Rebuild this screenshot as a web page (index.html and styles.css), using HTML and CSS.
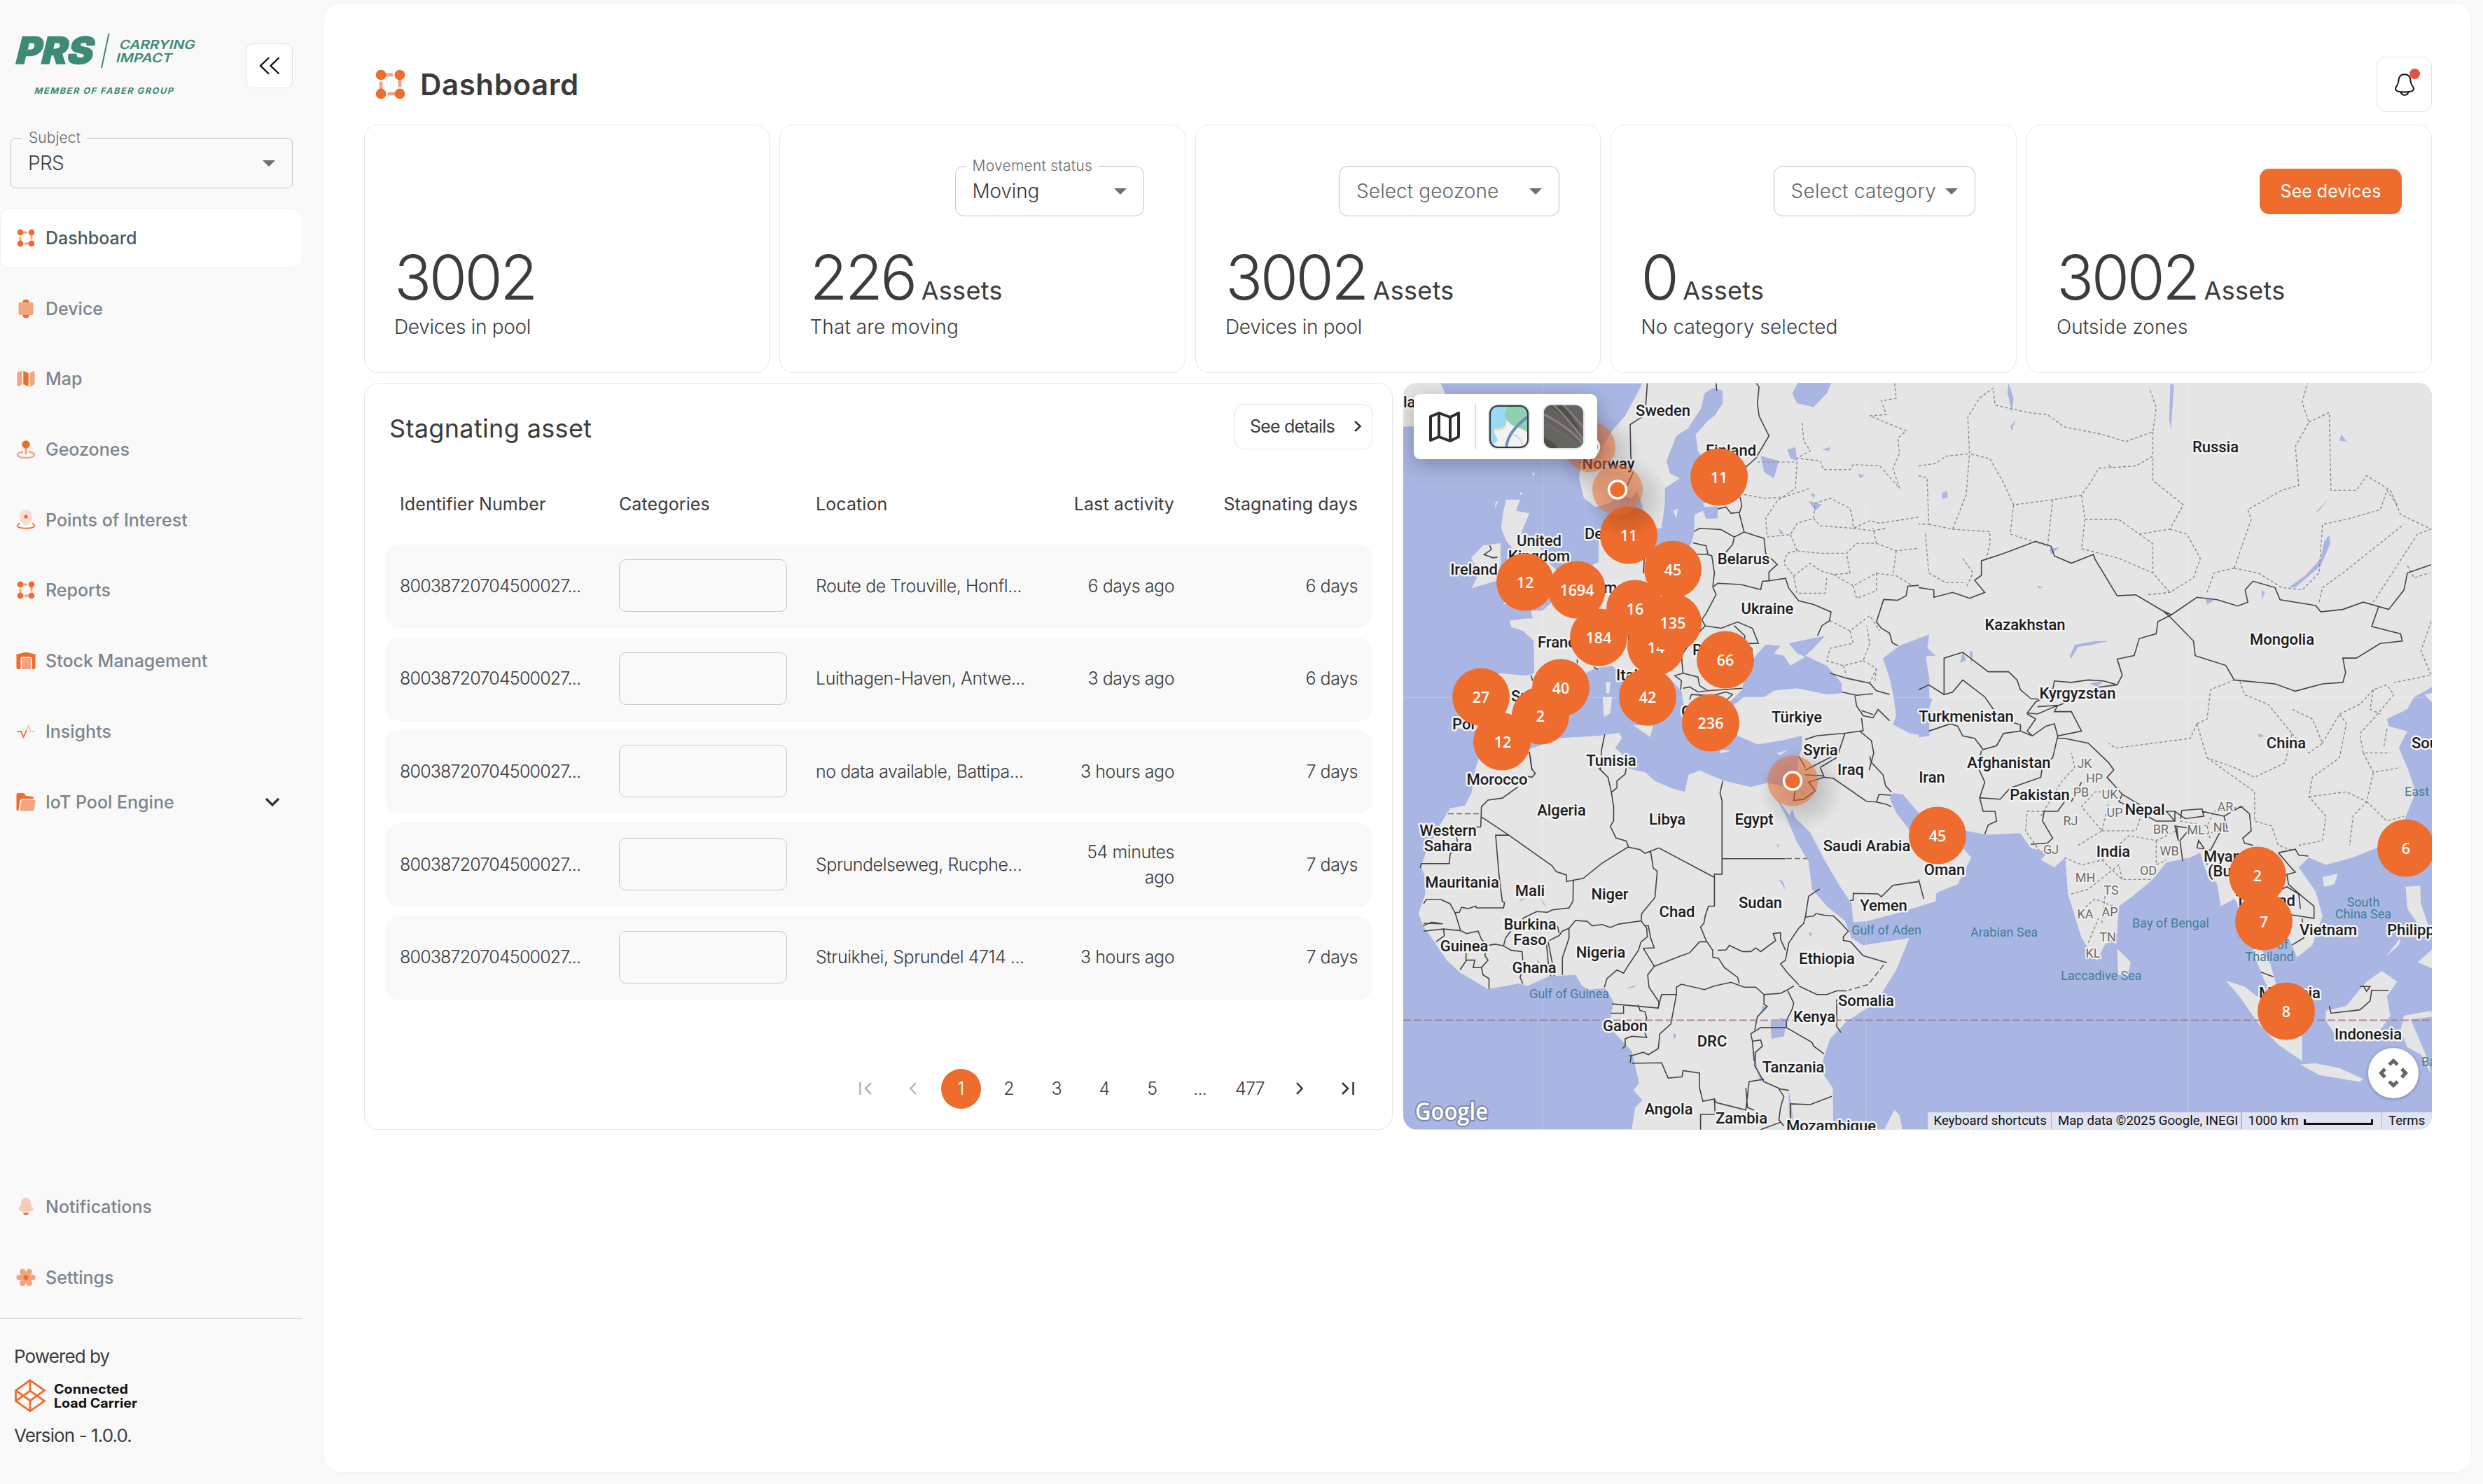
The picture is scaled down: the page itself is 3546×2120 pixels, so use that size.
FILE: index.html
```
<!DOCTYPE html>
<html lang="en">
<head>
<meta charset="utf-8">
<title>Dashboard</title>
<link rel="stylesheet" href="styles.css">
</head>
<body>
<svg class="defs" width="0" height="0" aria-hidden="true">
  <symbol id="i-nodes" viewBox="0 0 28 28">
    <path d="M6 6H15M22 6V15M22 22H13M6 22V13" stroke="#f3a580" stroke-width="3" stroke-linecap="round"/>
    <g fill="#ee6c2d"><circle cx="6" cy="6" r="4.4"/><circle cx="22" cy="6" r="4.4"/><circle cx="6" cy="22" r="4.4"/><circle cx="22" cy="22" r="4.4"/></g>
  </symbol>
  <symbol id="i-caret" viewBox="0 0 18 9"><path d="M0 0H18L9 9Z" fill="#6f6f6f"/></symbol>
</svg>
<div class="app">
  <aside class="sidebar">
    <div class="brand">
      <svg class="logo" width="270" height="94" viewBox="0 0 270 94" fill="#3d8b76">
        <g transform="skewX(-14)" font-family="Inter" font-weight="800">
          <text x="9" y="43" font-size="53" font-weight="900" textLength="110" lengthAdjust="spacingAndGlyphs" stroke="#3d8b76" stroke-width="1.5">PRS</text>
          <g font-weight="600" font-size="18"><text x="153" y="22" textLength="108" lengthAdjust="spacingAndGlyphs">CARRYING</text>
          <text x="153" y="41" textLength="80" lengthAdjust="spacingAndGlyphs">IMPACT</text></g>
          <text x="48" y="86" font-size="12.5" font-weight="700" letter-spacing="1.4" textLength="200" lengthAdjust="spacingAndGlyphs">MEMBER OF FABER GROUP</text>
        </g>
        <path d="M133.500 0L123 49" stroke="#3d8b76" stroke-width="2"/>
      </svg>
      <button class="collapse"><svg width="30" height="26" viewBox="0 0 30 26" fill="none" stroke="#111" stroke-width="2.400"><path d="M14 1.500L2 13L14 24.500M28.500 1.500L16.500 13L28.500 24.500"/></svg></button>
    </div>
    <div class="field subject"><span class="legend">Subject</span><span>PRS</span><svg class="caret"><use href="#i-caret"/></svg></div>
    <nav class="nav">
      <a class="item active"><svg class="ico"><use href="#i-nodes"/></svg>Dashboard</a>
      <a class="item"><svg class="ico" viewBox="0 0 28 28"><rect x="9.500" y="1" width="9" height="26" rx="3.500" fill="#ee6c2d"/><rect x="3.500" y="5" width="21" height="18" rx="2" fill="#f3a580"/></svg>Device</a>
      <a class="item"><svg class="ico" viewBox="0 0 28 28"><path d="M1.500 7Q1.500 4 8.500 3V22Q3 26 1.500 24ZM19.500 6Q25 2 26.500 4V21Q25 24 19.500 25Z" fill="#f3a580"/><path d="M10.300 3L17.700 6V25L10.300 22Z" fill="#ee6c2d"/></svg>Map</a>
      <a class="item"><svg class="ico" viewBox="0 0 28 28"><path d="M10 17.500C-2 19 0 26 14 26S30 19 18 17.500" fill="none" stroke="#f3a580" stroke-width="2.400"/><path d="M14 10V21" stroke="#f3a580" stroke-width="3"/><circle cx="14" cy="7" r="5.700" fill="#ee6c2d"/></svg>Geozones</a>
      <a class="item"><svg class="ico" viewBox="0 0 28 28"><path d="M14 0C8 0 5 4 5 9.500C5 15 10 21 14 21S23 15 23 9.500C23 4 20 0 14 0Z" fill="#f8dccf"/><circle cx="14" cy="9" r="2.600" fill="#ee6c2d"/><path d="M5 18.500C-3 23 4 25.700 14 25.700S31 23 23 18.500" fill="none" stroke="#ee6c2d" stroke-width="1.700"/></svg>Points of Interest</a>
      <a class="item"><svg class="ico"><use href="#i-nodes"/></svg>Reports</a>
      <a class="item"><svg class="ico" viewBox="0 0 28 28"><path d="M0 5L14 1.500L28 5L27.500 7V24Q27 26 25 26H23V11Q23 8.500 20.500 8.500H9Q6.500 8.500 6.500 11V26H3Q.5 26 .5 24V7Z" fill="#ee6c2d"/><path d="M8 11Q8 10 9 10H20Q21 10 21 11V26H8Z" fill="#f3a580"/></svg>Stock Management</a>
      <a class="item"><svg class="ico" viewBox="0 0 28 28" fill="none" stroke-width="1.800"><path d="M14 14L17.500 6L20.500 14H26" stroke="#f8c3aa"/><path d="M2 14H7L10.500 22L15 12" stroke="#ee6c2d"/></svg>Insights</a>
      <a class="item"><svg class="ico" viewBox="0 0 28 28"><path d="M.5 3Q.5 1 3 1H10Q12 1 14 5L23 6Q25 6 25 9H10Q5.500 9 5 14L3.500 26H2Q.5 26 .5 24Z" fill="#ee6c2d"/><path d="M7 13Q8 10.500 11 10.500H25Q28 10.500 27.500 13L26 24Q25 26.500 23 26.500H5.500Z" fill="#f3a580"/></svg>IoT Pool Engine<svg class="chev" width="22" height="14" viewBox="0 0 22 14"><path d="M2 2L11 11L20 2" fill="none" stroke="#333" stroke-width="3.200"/></svg></a>
    </nav>
    <nav class="nav lower">
      <a class="item"><svg class="ico" viewBox="0 0 28 28"><path d="M14 1C9 1 7 5 7 9C7 14 3.500 14 3.500 17C3.500 20 8 21 14 21S24.500 20 24.500 17C24.500 14 21 14 21 9C21 5 19 1 14 1Z" fill="#f7cdb9"/><path d="M10 22.500H18Q17 26 14 26T10 22.500Z" fill="#ee6c2d"/></svg>Notifications</a>
      <a class="item"><svg class="ico" viewBox="0 0 28 28"><g fill="#f3a580"><circle cx="14" cy="14" r="9"/><circle cx="4.500" cy="14" r="4"/><circle cx="23.500" cy="14" r="4"/><circle cx="9.200" cy="5.700" r="4"/><circle cx="18.800" cy="5.700" r="4"/><circle cx="9.200" cy="22.300" r="4"/><circle cx="18.800" cy="22.300" r="4"/></g><circle cx="14" cy="14" r="3.500" fill="#ee6c2d"/></svg>Settings</a>
    </nav>
    <footer class="foot">
      <p>Powered by</p>
      <svg class="clc" width="178" height="48" viewBox="0 0 178 48">
        <path d="M22 1.800L42.500 16.300L22 31L1.500 16.300ZM22 17L42.500 31.300L22 45.800L1.500 31.300ZM1.500 16.300V31.300M22 1.800V17M22 31V45.800" fill="none" stroke="#ee6c2d" stroke-width="2.800"/>
        <g font-family="Inter" font-weight="700" font-size="18.500" fill="#111"><text x="56" y="20.500" textLength="106" lengthAdjust="spacingAndGlyphs">Connected</text><text x="56" y="40.500" textLength="119" lengthAdjust="spacingAndGlyphs">Load Carrier</text></g>
      </svg>
      <p>Version - 1.0.0.</p>
    </footer>
  </aside>
  <main class="main">
    <header class="head">
      <svg class="head-ico"><use href="#i-nodes"/></svg>
      <h1>Dashboard</h1>
      <button class="bell"><svg width="28" height="32" viewBox="0 0 28 32" fill="none" stroke="#151515" stroke-width="2"><path d="M14 1.200C8.500 1.200 5.800 5 5.500 10C5.300 17 1 18 1 22C1 25 6 26.500 14 26.500S27 25 27 22C27 18 22.700 17 22.500 10C22.200 5 19.500 1.200 14 1.200Z"/><path d="M8.500 27Q10.500 30.800 14 30.800T19.500 27"/></svg><i class="dot"></i></button>
    </header>
    <section class="cards">
      <article class="card"><div class="ctl"></div><div class="num">3002</div><div class="sub">Devices in pool</div></article>
      <article class="card"><div class="ctl"><div class="field moving"><span class="legend">Movement status</span><span>Moving</span><svg class="caret"><use href="#i-caret"/></svg></div></div><div class="num">226<small>Assets</small></div><div class="sub wide">That are moving</div></article>
      <article class="card"><div class="ctl"><div class="field geozone"><span>Select geozone</span><svg class="caret"><use href="#i-caret"/></svg></div></div><div class="num">3002<small>Assets</small></div><div class="sub">Devices in pool</div></article>
      <article class="card"><div class="ctl"><div class="field category"><span>Select category</span><svg class="caret"><use href="#i-caret"/></svg></div></div><div class="num">0<small>Assets</small></div><div class="sub wide">No category selected</div></article>
      <article class="card"><div class="ctl flush"><button class="primary">See devices</button></div><div class="num">3002<small>Assets</small></div><div class="sub wide">Outside zones</div></article>
    </section>
    <section class="panels">
      <article class="table">
        <div class="thead"><h2>Stagnating asset</h2><button class="details">See details<svg width="12" height="18" viewBox="0 0 12 18"><path d="M2 2L9.500 9L2 16" fill="none" stroke="#333" stroke-width="2.600"/></svg></button></div>
        <div class="row cols"><span>Identifier Number</span><span>Categories</span><span>Location</span><span class="r">Last activity</span><span class="r">Stagnating days</span></div>
        <div class="rows">
          <div class="row"><span class="id">80038720704500027...</span><i class="box"></i><span>Route de Trouville, Honfl...</span><span class="r">6 days ago</span><span class="r">6 days</span></div>
          <div class="row"><span class="id">80038720704500027...</span><i class="box"></i><span>Luithagen-Haven, Antwe...</span><span class="r">3 days ago</span><span class="r">6 days</span></div>
          <div class="row"><span class="id">80038720704500027...</span><i class="box"></i><span>no data available, Battipa...</span><span class="r">3 hours ago</span><span class="r">7 days</span></div>
          <div class="row"><span class="id">80038720704500027...</span><i class="box"></i><span>Sprundelseweg, Rucphe...</span><span class="r">54 minutes<br>ago</span><span class="r">7 days</span></div>
          <div class="row"><span class="id">80038720704500027...</span><i class="box"></i><span>Struikhei, Sprundel 4714 ...</span><span class="r">3 hours ago</span><span class="r">7 days</span></div>
        </div>
        <div class="pager">
          <span><svg width="18" height="18" viewBox="0 0 18 18" stroke="#b3b3b3"><path d="M1.500 0V18M17 1L9 9L17 17"/></svg></span>
          <span><svg width="10" height="18" viewBox="0 0 10 18" stroke="#b3b3b3"><path d="M9 1L1.500 9L9 17"/></svg></span>
          <span class="on">1</span><span>2</span><span>3</span><span>4</span><span>5</span><span>...</span><span class="w">477</span>
          <span><svg width="10" height="18" viewBox="0 0 10 18" stroke="#333"><path d="M1 1L8.500 9L1 17"/></svg></span>
          <span><svg width="18" height="18" viewBox="0 0 18 18" stroke="#333"><path d="M1 1L9 9L1 17M16.500 0V18"/></svg></span>
        </div>
      </article>
      <article class="map">
        <svg class="world" viewBox="2004 547 1469 1066">
          <defs>
            <radialGradient id="halo"><stop offset="0" stop-color="#000" stop-opacity=".24"/><stop offset="1" stop-color="#000" stop-opacity="0"/></radialGradient>
            <filter id="relief" x="0" y="0" width="1" height="1"><feTurbulence type="fractalNoise" baseFrequency=".018 .026" numOctaves="4" seed="8"/><feColorMatrix values="0 0 0 0 .8  0 0 0 0 .8  0 0 0 0 .8  9 0 0 0 -4.900"/></filter>
            <clipPath id="uplands"><path d="M2470 560L2600 560L2640 547H3473V850L3400 1000L3330 1000L3280 1160L3200 1180L3100 1110L2980 1080L2900 1050L2960 960L2700 750L2600 800L2500 700Z"/></clipPath>
            <clipPath id="highlands"><path d="M2560 1020L2700 1030L2780 1110L2900 1060L2990 1050L3100 1120L3250 1150L3240 1210L3150 1160L2960 1110L2880 1150L2800 1190L2700 1100L2600 1050ZM2590 1330L2640 1350L2600 1400L2570 1380ZM2330 650L2390 560L2370 700ZM2310 1430L2500 1430L2500 1500L2400 1560L2350 1540Z"/></clipPath>
          </defs>
          <rect x="2004" y="547" width="1469" height="1066" fill="#a9b6e3"/>
          <g fill="#e5e5e5">
            <g transform="translate(2000 540) scale(.472 .357)">
              <path d="M0 0H115L135 60L95 130L60 190L0 195Z"/>
              <path d="M735 0L725 40L700 100L680 150L640 210L600 300L545 340L540 400L555 480L590 515L630 500L665 465L700 480L715 450L730 500L740 560L765 600L790 600L800 500L800 440L845 400L815 380L805 330L835 230L870 200L890 160L910 120L920 60L945 38L975 50L975 100L950 150L930 170L893 225L900 290L930 350L1000 360L1045 345L1052 385L1040 440L1020 470L960 490L915 500L920 515L960 512L960 560L925 562L915 530L890 545L888 620L880 660L860 700L740 725L660 735L640 680L625 600L600 610L600 735L560 760L520 840L470 880L430 930L395 930L400 960L370 962L330 970L335 995L370 1010L403 1050L405 1180L380 1190L300 1180L240 1200L190 1240L180 1330L170 1400L230 1410L290 1420L340 1440L420 1430L470 1350L540 1240L545 1190L590 1160L640 1150L690 1210L720 1290L760 1390L800 1340L800 1290L770 1220L730 1130L745 1090L775 1130L800 1180L850 1250L860 1330L880 1410L920 1460L960 1440L945 1330L1000 1290L1035 1245L1040 1180L1075 1110L1105 1065L1150 1070L1130 1100L1160 1110L1180 1150L1225 1115L1200 1100L1175 1060L1230 1045L1285 1030L1250 1080L1225 1110L1290 1150L1335 1220L1335 1260L1290 1265L1200 1240L1130 1250L1100 1275L1040 1275L1005 1310L1015 1370L1020 1430L1080 1465L1150 1450L1215 1430L1215 1500L1200 1620H1620V0Z"/>
              <path d="M320 485L362 485L350 530L390 540L365 620L415 660L450 740L500 800L470 860L380 890L310 905L345 830L325 770L350 700L320 650L305 600L310 540ZM250 668L303 660L303 740L290 810L215 840L240 775L213 720Z"/>
              <path d="M622 1215L635 1215L632 1260L622 1260ZM612 1275L640 1275L635 1340L615 1355ZM705 1388L765 1390L755 1435ZM965 1485L1000 1490L970 1500ZM1138 1500L1170 1488L1150 1508ZM240 1568L290 1520L400 1480L480 1440L600 1430L662 1418L670 1440L650 1480L685 1520L690 1620H230ZM825 530L840 520L835 560ZM288 495L296 490L285 520ZM362 455L370 460L362 468ZM398 380L406 378L404 395Z"/>
            </g>
            <g transform="translate(2000 1080) scale(.472 .3508)">
              <path d="M240 -5L225 60L215 150L195 200L150 212L110 300L75 400L62 450L75 490L75 560L55 640L68 690L100 750L140 830L180 880L265 948L360 925L385 935L450 895L530 890L550 935L570 950L620 945L645 1000L630 1100L700 1200L722 1330L705 1360L732 1400L710 1430L695 1560H1310L1308 1350L1282 1300L1278 1240L1300 1150L1350 1080L1440 1000L1500 870L1540 740L1470 755L1400 770L1365 740L1345 670L1290 610L1245 540L1235 430L1200 350L1165 240L1135 165L1150 190L1178 240L1185 215L1195 250L1240 310L1282 420L1330 530L1365 600L1370 675L1410 672L1500 640L1620 590V340L1568 330L1540 300L1500 230L1480 170L1490 150L1520 155L1568 230H1620V-60H1225L1205 0L1200 60L1185 130L1110 108L1060 125L980 100L935 75L905 58L872 75L860 145L820 130L770 100L740 65L690 50L685 -5Z"/>
              <path d="M1495 1440L1510 1460L1520 1530H1460L1475 1490Z"/>
            </g>
            <g transform="translate(2740 540) scale(.4847 .695)">
              <path d="M-10 0H1560V610L1500 640L1460 655L1440 680L1380 700L1385 715L1440 725L1415 760L1440 800L1465 850L1430 910L1350 965L1280 985L1200 1000L1150 985L1120 1005L1170 1055L1190 1105L1160 1165L1115 1190L1100 1165L1075 1130L1040 1110L1010 1090L1000 1165L1035 1200L1055 1250L1060 1290L1020 1240L985 1180L970 1110L930 1070L890 1085L880 1040L845 1010L830 975L800 985L730 995L690 1030L630 1065L590 1085L585 1140L548 1165L525 1198L480 1150L440 1060L432 985L400 1005L360 990L380 975L330 965L300 935L200 938L140 930L90 925L20 900L-10 880Z"/>
              <path d="M-10 900L60 930L130 965L155 985L115 1040L60 1055L-10 1088ZM585 1172L625 1200L615 1232L588 1225ZM905 1238L960 1250L1060 1305L1130 1350L1130 1403L1060 1370L1000 1325L945 1270ZM1125 1410L1170 1408L1240 1418L1310 1440L1300 1446L1180 1432ZM1200 1300L1260 1290L1320 1240L1365 1218L1410 1240L1380 1270L1390 1310L1340 1360L1230 1352L1200 1320ZM1430 1310L1510 1300L1515 1312L1450 1318L1470 1350L1500 1400L1510 1430L1480 1390L1440 1375L1420 1340ZM1435 1045L1478 1043L1480 1080L1500 1120L1515 1150L1470 1120L1440 1090ZM1375 1190L1420 1150L1415 1165ZM1470 1200L1520 1170V1215ZM1190 1025L1235 1018L1225 1040L1195 1045ZM1325 1440L1400 1440L1390 1450ZM1490 650L1560 640V700Z"/>
            </g>
          </g>
          <g clip-path="url(#uplands)"><rect x="2400" y="547" width="1073" height="700" filter="url(#relief)" opacity=".32"/></g>
          <g clip-path="url(#highlands)"><rect x="2004" y="547" width="1469" height="1066" filter="url(#relief)" opacity=".55"/></g>
          <g fill="#a9b6e3">
            <path transform="translate(2000 540) scale(.472 .357)" d="M1210 0H1310L1290 60L1250 115L1200 100L1185 60ZM1090 310L1145 330L1130 400L1100 375ZM1170 285L1195 275L1200 330L1180 320ZM860 385L868 390L866 405ZM1600 1025L1550 1050L1510 1070L1460 1120L1480 1200L1490 1260L1500 1350L1490 1385L1540 1420L1600 1432V1200L1590 1120ZM1145 600L1160 620L1150 625ZM1240 460L1255 465L1250 480ZM1235 490L1275 505L1255 530ZM1370 545L1366 580ZM1385 380L1405 390L1390 400ZM1275 285L1300 275L1298 290Z"/>
            <path transform="translate(2740 540) scale(.4847 .695)" d="M0 532L15 535L20 550L50 570L0 572ZM0 640L40 660L30 680L45 690L25 710L30 735L0 738ZM1210 322L1213 340L1185 385L1110 430L1090 430L1140 405L1185 370L1195 335ZM445 572L460 548L520 540L560 540L510 548L470 552L450 575ZM505 627L545 622L525 634ZM845 452L870 456L850 465ZM130 560L140 580L122 585ZM150 560L160 562L155 590ZM265 10L280 40L275 70L262 30ZM742 10L752 14L744 105L738 85ZM70 235L85 232L85 245L68 248ZM270 100L285 85L275 108ZM560 175L575 185L560 182ZM1245 115L1262 130L1240 128ZM1010 435L1020 440L1012 455ZM1000 730L1020 735L1003 738ZM385 350L415 348L390 362ZM348 425L365 430L355 432ZM1170 275L1210 245L1180 272Z"/>
            <path transform="translate(2000 1080) scale(.472 .3508)" d="M1120 1080L1140 1078L1150 1065L1170 1075L1160 1140L1122 1150ZM1072 1200L1080 1280L1100 1320L1090 1325L1070 1250L1066 1200ZM1174 1360L1182 1410L1188 1480L1176 1460ZM1095 1015L1108 1020L1092 1045ZM1235 715L1246 722L1240 735ZM1145 500L1158 510L1165 545ZM825 1125L835 1135L828 1155ZM680 945L715 930L705 942ZM1138 360L1145 355L1143 375ZM365 580L380 580L360 592ZM425 575L440 612L430 600ZM412 825L428 850L415 840Z"/>
          </g>
          <g class="dash">
            <path transform="translate(2000 540) scale(.472 .357)" d="M1495 20L1500 80L1455 90L1470 145L1420 150L1530 210L1505 240L1510 300L1490 360L1510 440L1490 410L1450 350L1370 345L1360 365L1280 365L1270 330L1200 320L1240 290L1220 250L1215 170M1080 335L1200 335L1195 440L1140 490L1105 560L1110 635L1180 625L1200 580L1250 560L1270 590L1370 600L1420 570L1450 580L1568 555M1040 465L1100 480L1160 475L1240 440M1250 560L1255 500L1300 480L1360 520L1368 560L1370 600L1430 610L1470 600M1180 625L1200 690L1170 700L1160 740L1190 790L1240 740L1270 770L1310 785L1360 780L1350 700L1380 660L1440 660L1430 600M1200 690L1270 700L1350 700M1190 790L1200 860L1285 860L1290 800M1310 785L1370 830L1440 780L1500 790L1550 830M1370 830L1380 880L1440 850L1440 780M1440 660L1500 690L1568 680M1500 690L1490 790M1300 970L1360 1010L1420 950L1450 1010M1360 1010L1370 1060L1300 1080L1290 1130L1340 1150L1400 1130L1420 1060L1410 990M1340 1150L1350 1190M1400 1130L1440 1160L1420 1220M1440 1160L1435 1220"/>
            <path transform="translate(2740 540) scale(.4847 .695)" d="M0 180L50 175L80 160L150 155L145 80L180 40L220 20L225 55L320 70L380 75L430 100L540 115L610 130L690 110L700 60L680 20M690 110L690 160L640 180L530 185L510 210L480 240L390 250L280 260L250 215L210 165L150 155M0 200L25 205L30 300L0 300M30 300L100 310L140 240L150 155M280 260L270 320L380 345L395 250M480 240L490 290L590 290L650 320L740 310L780 260L690 210L690 160M490 290L480 350L590 370L690 400L740 440M650 320L690 340L690 400M740 310L790 320L830 370L810 410L740 440L670 445M100 310L210 315L210 340L200 370M20 320L30 400L80 420L140 420M130 370L160 400L140 430M930 390L980 290L970 270L1070 230L1120 220L1110 140L1150 90L1130 50L1145 10M1150 90L1210 70L1215 230L1290 230L1320 200L1390 230L1420 280L1510 310M930 390L870 400L850 440M930 390L1000 400L1070 430L1130 435L1180 400L1190 300L1260 290L1360 270L1380 230L1410 260M1180 460L1190 430L1250 400L1340 350L1430 300M1340 460L1470 320L1510 310M1440 385L1460 410L1505 400M820 710L850 700L860 640L930 620M820 710L800 740L580 760L560 750M820 710L850 780L930 800L990 820L1080 790L1100 730L1030 670L960 650L945 620M850 780L990 850L990 910L1040 920L1060 960L1100 970M1100 730L1150 770L1190 750L1160 700L1100 680M1190 750L1240 690L1260 710L1240 780L1160 820L1150 860L1200 900L1190 950L1120 960M1240 690L1300 670L1340 640L1380 630L1400 650L1340 700L1300 730L1310 770L1390 770M1310 770L1340 810L1420 800M1340 810L1320 870L1280 900L1270 960M1320 870L1380 910L1430 900M1150 860L1260 850L1320 870M1340 640L1330 680L1360 690M1380 720L1370 760M1510 500L1480 560L1510 610L1440 620L1400 625M370 890L320 890L315 930L355 970M360 900L420 830L460 800L450 770M430 985L480 1000L540 990L620 940L700 950L760 930M540 990L600 1030L690 1030M450 1060L500 1050L590 1000L600 1030M470 1100L520 1070L590 1090M540 1120L550 1060M500 1160L530 1110M470 960L540 930L480 880L520 850L580 850M540 930L640 930L660 890M700 950L700 1000L730 990M540 930L560 870M770 910L850 920L870 890L960 880M850 920L860 950M820 940L890 930L900 910"/>
          </g>
          <g class="border">
            <path transform="translate(2000 540) scale(.472 .357)" d="M747 20L742 110L730 155L695 185L697 310L703 380L685 430M955 20L957 50M1077 20L1085 35L1080 100L1085 150L1115 230L1075 320L1045 355M960 522L985 515L1000 540L1028 535M1028 475L1033 510L1025 540L1040 615L1010 635L970 605L905 600L888 613M1010 635L1005 665L985 695L960 720M885 658L925 670L930 705L898 703M1040 615L1075 630L1100 640L1105 700L1140 745L1115 775L1115 810L1095 812L1090 845L1030 825L960 820L945 835L955 865L925 940L912 965L922 990L970 1000L1020 975L1065 1000L1083 1060L1040 1062L1042 1030L1010 990M930 705L942 710L950 780L945 830M1115 810L1165 800L1175 840L1205 890L1250 905L1303 935L1298 970L1275 990L1262 1030M922 990L880 1050L850 1110L855 1180L830 1190L850 1210L848 1245M855 1180L900 1195L905 1230L930 1250L1035 1240M855 1240L875 1235L900 1255L930 1250M875 1285L880 1265L940 1270L985 1255L1005 1265L980 1295M738 720L735 780M395 1188L400 1210M585 1155L597 1165M690 1030L690 1060M270 668L275 685L253 705L280 718L293 716M1300 1180L1350 1200L1420 1220L1440 1250L1480 1265M1335 1255L1380 1268L1430 1262M1375 1270L1380 1310L1400 1350L1430 1358L1445 1325L1480 1370M1395 1330L1430 1345M1395 1360L1400 1410L1345 1420L1260 1430L1225 1445M1345 1420L1325 1500L1225 1568M1390 1412L1425 1450L1432 1500L1418 1568M1568 828L1535 832L1530 870L1505 888L1462 885L1440 975L1455 1000L1480 1020L1488 1058L1505 1070M618 1425L608 1490L605 1568M390 1495L398 1568M535 1125L535 1140"/>
            <path transform="translate(2000 1080) scale(.472 .3508)" d="M393 0L397 50L408 70L398 85L385 82M355 125L308 170L265 178L245 205L243 288M243 288L212 288M170 325L172 350L150 400L148 437L63 437L60 455M243 245L325 318L458 445L472 470L502 483L503 510L553 497L610 435L690 368L683 345L652 332L635 285L645 262V205L638 145L628 85L600 48M683 48L680 72L655 100L655 128L640 145M325 321H288L298 480L308 590L315 596L312 617H230L228 610L205 620L185 615L178 635L165 636L150 600L122 583H78L70 600M690 370L725 380L740 395L782 373L950 493M757 388L765 455L777 468L770 575L730 640L728 670L660 683L635 697L610 685L580 690L565 672L530 668L510 700L510 740L490 820V890M523 507L522 590L510 617L460 625L445 635L412 632L370 660M975 100L967 150L973 180V480H950V610H932L922 650L918 680L908 695L925 750L945 790V818L962 822L980 860L1020 900L1025 925M973 417H1165M728 670L745 700L747 735L728 755L720 790L690 850L675 883L655 870L625 905L617 940M738 690L750 690L757 740L768 780L735 782L768 855L850 812L875 800L905 755L925 755M768 855L748 890L752 940L782 1000L780 1025L640 1008M637 1046H675V1010M718 1012L725 1035L740 1040L745 1065L735 1110L745 1145L700 1140L680 1150V1180L672 1190M780 1025L790 970H835L818 1090L785 1130L780 1190L750 1215L735 1205L710 1215L692 1220M835 970L835 940L850 928L920 950L950 935L1000 920L1040 940L1075 940L1100 970L1150 965L1172 950L1190 935M1100 970L1100 1010L1110 1018L1080 1060L1072 1115M1172 955L1190 1005L1185 1030L1168 1075L1168 1105H1090L1060 1130L1065 1160L1090 1155L1095 1180L1075 1205L1072 1260L1085 1290L1100 1325L1150 1355L1175 1360M1168 1105L1245 1165L1250 1180L1282 1212M1065 1160L1070 1240M1205 930L1170 880L1150 845L1165 830L1175 760L1205 700L1220 680L1225 655L1235 570L1268 540M1225 655L1250 650L1258 640L1285 648L1310 650L1330 675L1355 712L1340 735V750L1362 755L1400 812L1472 840M1165 790L1150 745V718L1128 722L1135 750L1090 795L1075 780L1060 795L1035 795L995 770L985 788L960 790M1205 935L1260 970H1290L1320 955L1350 955M1320 990V1100L1333 1125M700 1250L790 1248L810 1310L852 1305L855 1280L905 1290V1350L915 1405L950 1395L955 1410L1000 1425L1045 1440L1055 1325L1100 1315M950 1395L952 1458H908V1520M1045 1350L1050 1430L1070 1440M1145 1355L1160 1385L1150 1430L1145 1480L1160 1505M1180 1480L1180 1415L1240 1418L1305 1385M1090 1520L1150 1490M165 636L182 710L130 703L70 712M70 680L128 682L95 675L68 690M130 703L133 730L108 755M182 710L200 722L235 712L245 745L265 770L285 765L300 768L312 772L318 740L340 700L330 685M265 770L255 810L265 830L245 860L250 890L268 905V948M200 770L198 830L225 830L220 860L245 860M200 830L180 870M312 772L335 790L368 795L372 860L362 900L370 925M440 740L448 850L455 895M370 660L375 680M447 755L462 860L465 895M510 700L490 712L480 730L450 750M475 690L480 720M698 1220L695 1248M1205 0L1225 45M1270 45L1282 85L1235 105L1255 140L1220 175L1190 180L1195 130M1282 85L1310 90L1410 183L1440 186L1448 155L1485 158M1440 186L1470 195L1485 205M1282 80L1225 75M1320 5L1270 45M1420 0L1425 25L1460 75L1468 120L1485 145M1360 587L1370 585V558L1445 560L1455 572L1490 525L1568 510"/>
            <path transform="translate(2740 540) scale(.4847 .695)" d="M0 430L45 435L45 450L100 440L150 452L195 440L165 415L185 405L185 375L250 360L345 335L390 345L400 365L450 380L515 362L520 372L585 447L640 445L720 478L745 486L820 450L880 455L940 468L970 460L962 435L985 417L1050 430L1065 455L1170 467L1185 480L1250 475L1310 460L1385 475L1430 435L1440 400L1510 383M720 478L740 490L810 540L815 570L905 590L930 620L1050 628L1110 643L1190 628L1250 625L1258 605L1250 575L1290 575L1360 545L1425 540L1420 525L1335 510L1355 470M745 486L705 500L700 525L650 535L635 570L585 577L600 610L585 630L545 622L500 620L450 625L400 622L395 640L360 660L330 658L300 640L290 620L265 603L205 603L130 563L75 575V650L100 645L130 620L195 655L240 700L300 712V725L250 730L230 755L190 763L165 740L130 735L115 715L95 710L30 725M0 640L30 630L75 650M585 630L530 635L480 655L400 675L350 690L320 688L345 665L360 660M350 675L410 672L400 685L450 685L480 725L410 735L400 710L375 715L335 735L320 725L345 700L320 690M335 735L300 725M410 735L395 780L365 795L360 820L270 842L240 865L180 862L190 890L225 890L230 910L205 918L195 937M185 765L175 800L195 830L180 862M410 740L430 740L500 750L560 790L575 805L555 820L600 855L660 880L730 890L755 910M430 870L410 890L370 890L365 910L395 945L380 955L330 958M480 830L450 870M600 855L590 870L620 880L700 910L755 910V890L730 890M755 890L785 905L840 900L835 885L775 888L772 905M835 890L900 900L950 880L975 895L980 930L955 945L960 955L985 960M900 900L910 930L890 930L860 970L820 965L825 950L840 965L850 1000M760 920L765 950L755 920L800 925L770 950L778 992M1060 975L1110 968L1120 980L1148 982M1060 975L1090 1000L1110 1015L1085 1020L1090 1040L1130 1065L1165 1085L1165 1110L1120 1105L1070 1100M1070 1050L1085 1045L1120 1060L1125 1090M1130 1110L1135 1150L1100 1165M1008 1220L1025 1225L1045 1230M1210 1290L1215 1305L1300 1298L1330 1280L1335 1258L1385 1258M1300 1250L1330 1250L1320 1260L1310 1248M0 1030L15 1070"/>
          </g>
          <g fill="none" stroke="#fff" stroke-opacity=".16" stroke-width="1.500"><path d="M2203 547V1613M2665 547V1613M3125 547V1613M2004 996H3473"/></g>
          <path d="M2004 1457H3473" stroke="#a3778f" stroke-opacity=".85" stroke-width="1.800" stroke-dasharray="11 4"/>
          <path d="M2068 1162H2113M2551 1226H2581M2690 1378L2668 1406L2640 1414" class="dash2"/>
          <g class="lbl">
            <text x="2046" y="581" class="e">Iceland</text><text x="2375" y="593">Sweden</text><text x="2297" y="669">Norway</text><text x="2472" y="650">Finland</text><text x="2263" y="769" class="s">Denmark</text>
            <text x="2198" y="779">United</text><text x="2198" y="801">Kingdom</text><text x="2105" y="820">Ireland</text><text x="2490" y="805">Belarus</text><text x="2300" y="846">Germany</text><text x="2524" y="876">Ukraine</text>
            <text x="2196" y="924" class="s">France</text><text x="2417" y="935" class="s">Romania</text><text x="2308" y="971" class="s">Italy</text><text x="2158" y="1001" class="s">Spain</text><text x="2074" y="1041" class="s">Portugal</text><text x="2566" y="1031">Türkiye</text><text x="2401" y="1023" class="s">Greece</text>
            <text x="2600" y="1078">Syria</text><text x="2301" y="1093">Tunisia</text><text x="2138" y="1120">Morocco</text><text x="2643" y="1106">Iraq</text><text x="2230" y="1164">Algeria</text><text x="2381" y="1177">Libya</text><text x="2505" y="1177">Egypt</text>
            <text x="2068" y="1193">Western</text><text x="2068" y="1215">Sahara</text><text x="2666" y="1215">Saudi Arabia</text><text x="2088" y="1267">Mauritania</text><text x="2185" y="1279">Mali</text><text x="2299" y="1284">Niger</text><text x="2395" y="1309">Chad</text><text x="2514" y="1296">Sudan</text><text x="2690" y="1300">Yemen</text>
            <text x="2185" y="1327">Burkina</text><text x="2185" y="1349">Faso</text><text x="2091" y="1358">Guinea</text><text x="2286" y="1367">Nigeria</text><text x="2191" y="1389">Ghana</text><text x="2609" y="1376">Ethiopia</text><text x="2665" y="1436">Somalia</text><text x="2591" y="1459">Kenya</text><text x="2321" y="1472">Gabon</text><text x="2445" y="1494">DRC</text><text x="2561" y="1531">Tanzania</text><text x="2383" y="1591">Angola</text><text x="2487" y="1604">Zambia</text><text x="2615" y="1615">Mozambique</text>
            <text x="3164" y="645">Russia</text><text x="2892" y="899">Kazakhstan</text><text x="3259" y="920">Mongolia</text><text x="2967" y="997">Kyrgyzstan</text><text x="2808" y="1030">Turkmenistan</text><text x="3265" y="1068">China</text><text x="3444" y="1068" class="s">South Korea</text><text x="2869" y="1096">Afghanistan</text><text x="2759" y="1117">Iran</text><text x="2913" y="1142">Pakistan</text><text x="3063" y="1163">Nepal</text><text x="3018" y="1223">India</text><text x="2777" y="1249">Oman</text>
            <text x="3147" y="1230" class="s">Myanmar</text><text x="3153" y="1251" class="s">(Burma)</text><text x="3278" y="1293" class="e">Thailand</text><text x="3325" y="1335">Vietnam</text><text x="3409" y="1335" class="s">Philippines</text><text x="3270" y="1425">Malaysia</text><text x="3382" y="1484">Indonesia</text>
          </g>
          <g class="sea">
            <text x="2241" y="1425">Gulf of Guinea</text><text x="2694" y="1334">Gulf of Aden</text><text x="2862" y="1337">Arabian Sea</text><text x="3001" y="1399">Laccadive Sea</text><text x="3100" y="1324">Bay of Bengal</text><text x="3375" y="1294">South</text><text x="3375" y="1311">China Sea</text><text x="3241" y="1355">Gulf of</text><text x="3241" y="1372">Thailand</text><text x="3434" y="1136" class="s">East China Sea</text><text x="3458" y="1522" class="s">Banda Sea</text>
          </g>
          <g class="state">
            <text x="2977" y="1096">JK</text><text x="2991" y="1117">HP</text><text x="2972" y="1137">PB</text><text x="3013" y="1140">UK</text><text x="3020" y="1166">UP</text><text x="2957" y="1178">RJ</text><text x="3086" y="1190">BR</text><text x="2929" y="1219">GJ</text><text x="3098" y="1221">WB</text><text x="3068" y="1249">OD</text><text x="2978" y="1259">MH</text><text x="3015" y="1277">TS</text><text x="3013" y="1308">AP</text><text x="2978" y="1311">KA</text><text x="3010" y="1344">TN</text><text x="2989" y="1367">KL</text><text x="3178" y="1158">AR</text><text x="3136" y="1191">ML</text><text x="3172" y="1187">NL</text>
          </g>
          <g class="clusters">
            <circle cx="2365" cy="923" r="41"/><text x="2365" y="932">14</text>
            <circle cx="2455" cy="681" r="41"/><text x="2455" y="689">11</text>
            <circle cx="2326" cy="764" r="41"/><text x="2326" y="772">11</text>
            <circle cx="2389" cy="813" r="41"/><text x="2389" y="821">45</text>
            <circle cx="2335" cy="869" r="41"/><text x="2335" y="877">16</text>
            <circle cx="2389" cy="889" r="41"/><text x="2389" y="897">135</text>
            <circle cx="2178" cy="831" r="41"/><text x="2178" y="839">12</text>
            <circle cx="2252" cy="842" r="41"/><text x="2252" y="850">1694</text>
            <circle cx="2283" cy="910" r="41"/><text x="2283" y="918">184</text>
            <circle cx="2464" cy="942" r="41"/><text x="2464" y="950">66</text>
            <circle cx="2200" cy="1022" r="41"/><text x="2200" y="1030">2</text>
            <circle cx="2229" cy="982" r="41"/><text x="2229" y="990">40</text>
            <circle cx="2115" cy="995" r="41"/><text x="2115" y="1003">27</text>
            <circle cx="2145" cy="1059" r="41"/><text x="2146" y="1067">12</text>
            <circle cx="2353" cy="995" r="41"/><text x="2353" y="1003">42</text>
            <circle cx="2443" cy="1032" r="41"/><text x="2443" y="1040">236</text>
            <circle cx="2767" cy="1193" r="41"/><text x="2767" y="1201">45</text>
            <circle cx="3436" cy="1211" r="41"/><text x="3436" y="1219">6</text>
            <circle cx="3224" cy="1250" r="41"/><text x="3224" y="1258">2</text>
            <circle cx="3233" cy="1316" r="41"/><text x="3233" y="1324">7</text>
            <circle cx="3265" cy="1444" r="41"/><text x="3265" y="1452">8</text>
          </g>
          <g class="pins">
            <g transform="translate(2271 638)"><circle class="h" r="60" cx="12" cy="12"/><circle class="o" r="36"/><circle class="c" r="12.500"/></g>
            <g transform="translate(2310 699)"><circle class="h" r="60" cx="12" cy="12"/><circle class="o" r="36"/><circle class="c" r="12.500"/></g>
            <g transform="translate(2560 1115)"><circle class="h" r="60" cx="12" cy="12"/><circle class="o" r="36"/><circle class="c" r="12.500"/></g>
          </g>
          <text x="2021" y="1599" class="google" textLength="104" lengthAdjust="spacingAndGlyphs">Google</text>
        </svg>
        <div class="tools">
          <svg width="46" height="46" viewBox="0 0 46 46" fill="none" stroke="#2e2e2e" stroke-width="4" stroke-linejoin="round"><path d="M3 8L15 3L31 9L43 3V37L31 43L15 37L3 42ZM15 3V37M31 9V43"/></svg>
          <i class="sep"></i>
          <svg class="thumb" width="60" height="65" viewBox="0 0 60 65"><clipPath id="r1"><rect x="3" y="3" width="54" height="59" rx="11"/></clipPath><rect width="60" height="65" rx="14" fill="#dfe2e7"/><g clip-path="url(#r1)"><rect width="60" height="65" fill="#f3f1f2"/><path d="M0 0H28L26 30L20 36L8 38L14 52L0 65Z" fill="#9bd8f1"/><path d="M28 0H60V42Q50 36 44 34Q28 30 24 16Z" fill="#8fd0b1"/><path d="M26 65Q26 40 60 16" stroke="#6c8db5" stroke-width="4" fill="none"/><path d="M36 44Q48 46 50 65" stroke="#cfd6e0" stroke-width="2" fill="none"/><path d="M27 30Q22 38 9 37" stroke="#f6dfae" stroke-width="3" fill="none"/></g><rect x="3" y="3" width="54" height="59" rx="11" fill="none" stroke="#2b3a3c" stroke-width="2"/></svg>
          <svg class="thumb" width="60" height="65" viewBox="0 0 60 65"><clipPath id="r2"><rect x="2" y="2" width="56" height="61" rx="11"/></clipPath><rect width="60" height="65" rx="14" fill="#dfe2e7"/><g clip-path="url(#r2)"><rect width="60" height="65" fill="#666363"/><path d="M0 0H30L60 48V60L44 40L10 14L0 12Z" fill="#4a5249"/><path d="M8 0L60 44V62L0 18V4Z" fill="#665f5f"/><path d="M0 46L16 56L24 65H0Z" fill="#46533f"/><g fill="none" stroke="#8b817b"><path d="M0 14Q40 34 60 60" stroke-width="3"/><path d="M14 0Q40 24 60 54M28 0Q48 20 60 36" stroke-width="2.500"/><path d="M0 28Q30 40 54 65" stroke-width="1.200" stroke-dasharray="2 3"/></g></g></svg>
        </div>
        <button class="camera"><svg width="48" height="48" viewBox="0 0 48 48" fill="none" stroke="#666" stroke-width="5"><path d="M18 12L24 6.500L30 12M18 36L24 41.500L30 36M12 18L6.500 24L12 30M36 18L41.500 24L36 30"/></svg></button>
        <div class="legal"><span class="l1">Keyboard shortcuts</span><span class="l2">Map data ©2025 Google, INEGI</span><span class="l3">1000 km<i class="scale"></i></span><span class="l4">Terms</span></div>
      </article>
    </section>
  </main>
</div>
</body>
</html>
```
FILE: styles.css
```
*{box-sizing:border-box}
body{margin:0;background:#f9f9f9;color:#3c3c3c;font-family:Inter,"Liberation Sans",sans-serif;font-size:28px;font-weight:350}
.defs{position:absolute}
button{font:inherit;color:inherit;background:#fff;border:1.500px solid #e3e3e3;padding:0;display:flex;align-items:center;justify-content:center}
h1,h2,p{margin:0;font-weight:400}
.app{display:flex;height:2120px;padding:4px 16px 16px 0}
.sidebar{width:462px;flex:none;display:flex;flex-direction:column;padding-top:44px}
.brand{display:flex;justify-content:space-between;padding:0 44px 0 22px;height:149px}
.logo{overflow:visible}
.collapse{width:67px;height:64px;margin-top:14px;border-radius:10px}
.field{position:relative;height:72px;border:1.500px solid #c2c2c2;border-radius:13px;display:flex;align-items:center;justify-content:space-between;padding:0 24px 0 24px}
.caret{width:18px;height:9px}
.legend{position:absolute;left:15px;top:-17px;padding:0 9px;font-size:21px;line-height:32px;color:#6a6a6a;background:#fff;letter-spacing:.25px}
.subject{margin:0 44px 28px 15px;border-radius:7px;letter-spacing:-.7px}
.subject .legend{background:#f9f9f9;letter-spacing:.1px;padding:0 9px 0 10px}
.nav{display:flex;flex-direction:column;gap:14.700px;width:432px}
.item{height:86px;display:flex;align-items:center;gap:14.500px;padding-left:21.500px;border-radius:14px;border:1px solid transparent;font-size:25px;font-weight:500;color:#7b858e}
.item.active{background:#fff;border-color:#f1f1f1;color:#455a64}
.ico{width:28px;height:28px;flex:none}
.chev{margin-left:auto;margin-right:31px}
.lower{margin-top:auto;padding-bottom:15px;border-bottom:1.500px solid #dadada}
.foot{height:220px;padding:35px 20px 0;font-size:26px;font-weight:300;letter-spacing:-.9px;line-height:38px}
.clc{display:block;margin:13px 0 14px 1px;letter-spacing:0}
.main{flex:1;background:#fff;border:1px solid #f4f4f4;border-radius:24px;padding:76px 56px 0 57px}
.head{display:flex;align-items:center;height:79px;padding-left:14px}
.head-ico{width:47px;height:47px}
h1{font-size:42px;font-weight:600;letter-spacing:.6px;margin-left:19px;color:#3a3a3a}
.bell{position:relative;width:79px;height:79px;border-radius:14px;margin-left:auto}
.dot{position:absolute;left:46px;top:16px;width:15px;height:15px;border-radius:50%;background:#e25241}
.cards{display:grid;grid-template-columns:repeat(5,1fr);gap:14.400px;margin-top:18px}
.card{height:355px;border:1.500px solid #e7e7e9;border-radius:20px;padding:58px 42px 0}
.ctl{height:72px;display:flex;justify-content:flex-end;align-items:center;padding-right:16px}
.ctl.flush{padding-right:0}
.moving{width:270px;letter-spacing:-.2px}
.geozone{width:315px;letter-spacing:.1px}
.category{width:288px;letter-spacing:.25px}
.geozone>span,.category>span{color:#666;white-space:nowrap}
.primary{width:203px;height:65px;border:0;border-radius:14px;background:#ee6c2d;color:#fff;font-size:25px;font-weight:400}
.num{font-size:88px;font-weight:300;line-height:80px;letter-spacing:-3.600px;margin-top:47px;display:flex;align-items:baseline}
.num small{font-size:36px;font-weight:400;letter-spacing:.3px;margin-left:9px;line-height:1}
.sub{line-height:36px;margin-top:13px;letter-spacing:-.3px}
.sub.wide{letter-spacing:.1px}
.panels{display:grid;grid-template-columns:1fr 1fr;gap:15px;margin-top:14px}
.table{height:1067px;border:1.500px solid #e7e7e9;border-radius:20px;padding:29px 28px 0 29px}
.thead{display:flex;justify-content:space-between;align-items:center;height:65px}
h2{font-size:36px;letter-spacing:.35px;margin:5px 0 0 6px}
.details{width:197px;height:65px;border-radius:14px;font-size:25px;font-weight:400;letter-spacing:-.8px;justify-content:space-between;padding:0 14px 2px 21px}
.row{height:119px;display:grid;grid-template-columns:313px 281px 355px 157px 1fr;align-items:center;padding:0 21px 2px 21px;background:#f9f9f9;border-radius:20px;font-size:25px;line-height:36px;letter-spacing:-.45px;white-space:nowrap}
.row.cols{background:none;height:136px;padding-top:22px;letter-spacing:.1px;font-weight:400}
.rows{display:grid;gap:13.700px}
.id{letter-spacing:-.8px}
.r{text-align:right}
.box{width:240px;height:75px;border:1.500px solid #c3c8d3;border-radius:10px}
.pager{display:flex;justify-content:flex-end;gap:11.300px;margin:99px 7px 0 0}
.pager span{width:57px;height:57px;border-radius:50%;display:flex;align-items:center;justify-content:center;font-size:25px;letter-spacing:-.8px}
.pager svg{fill:none;stroke-width:2.500}
.pager .w{width:63px}
.pager .on{background:#ee6c2d;color:#fff}
.map{position:relative;height:1067px;border-radius:20px;overflow:hidden}
.world{display:block;width:100%;height:100%}
.border path,.dash path{fill:none;vector-effect:non-scaling-stroke}
.border path{stroke:#444;stroke-width:1.600}
.dash path{stroke:#8b8b8b;stroke-width:1.400;stroke-dasharray:4 3}
.dash2{fill:none;stroke:#666;stroke-width:1.600;stroke-dasharray:8 4}
.lbl text{font:500 22px Roboto,sans-serif;fill:#1c1c1f;text-anchor:middle;paint-order:stroke;stroke:#f3f3f3;stroke-width:5px;stroke-linejoin:round}
.lbl .s,.sea .s{text-anchor:start}
.lbl .e{text-anchor:end}
.sea text{font:400 18px Roboto,sans-serif;fill:#3f7f9c;text-anchor:middle}
.sea .s{text-anchor:start}
.state text{font:400 18px Roboto,sans-serif;fill:#6b6b6b;text-anchor:middle;paint-order:stroke;stroke:#f0f0f0;stroke-width:4px}
.clusters circle{fill:#ee6c2d}
.clusters text{font:600 21.500px "Open Sans",sans-serif;fill:#fff;text-anchor:middle}
.pins .h{fill:url(#halo)}
.pins .o{fill:#ee6c2d;opacity:.52}
.pins .c{fill:#ee6c2d;stroke:#fff;stroke-width:3.500}
.google{font:600 34px "Open Sans",sans-serif;fill:#fff;paint-order:stroke;stroke:#7d87a8;stroke-width:4px}
.tools{position:absolute;left:15px;top:16px;width:262px;height:93px;border-radius:9px;background:#fff;box-shadow:0 8px 30px rgba(0,0,0,.26);display:flex;align-items:center;padding-left:21px}
.sep{width:2px;height:65px;background:#dcdee3;margin:0 17px 0 20px}
.thumb+.thumb{margin-left:18px}
.camera{position:absolute;left:1378px;top:950px;width:72px;height:72px;border:0;border-radius:50%;box-shadow:0 1px 5px rgba(0,0,0,.3)}
.legal{position:absolute;right:0;bottom:0;display:flex;gap:1.500px;height:25px;font:400 18.600px/25px Roboto,sans-serif;color:#111;white-space:nowrap}
.legal span{background:#e0e3f0;padding-left:9px}
.l1{width:176px}
.l2{width:270px}
.l3{width:199px;display:flex;gap:7px}
.l4{width:71px}
.scale{width:99px;height:8px;margin-top:10px;border:3px solid #111;border-top:0}
```
